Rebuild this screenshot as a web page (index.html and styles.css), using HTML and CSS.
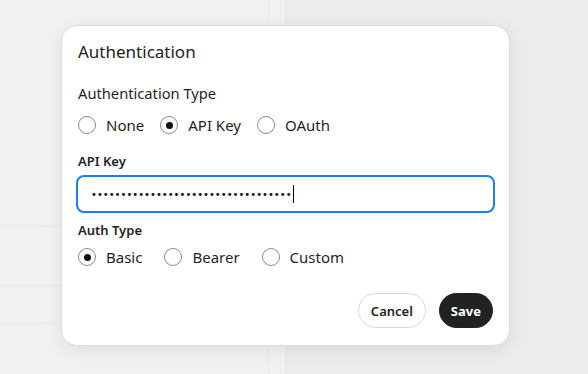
FILE: index.html
```html
<!DOCTYPE html>
<html>
<head>
<meta charset="utf-8">
<link rel="stylesheet" href="styles.css">
</head>
<body>
<div class="backdrop">
  <div class="panel-left">
    <div class="row r1"></div>
    <div class="row r2"></div>
    <div class="row r3"></div>
  </div>
  <div class="panel-right"></div>
</div>
<div class="dialog">
  <h1 class="title">Authentication</h1>
  <div class="section-label">Authentication Type</div>
  <div class="radios radios-top">
    <label class="radio"><span class="circle"></span>None</label>
    <label class="radio"><span class="circle checked"></span>API Key</label>
    <label class="radio"><span class="circle"></span>OAuth</label>
  </div>
  <div class="field-label">API Key</div>
  <div class="input"><span class="dots">••••••••••••••••••••••••••••••••••</span><span class="caret"></span></div>
  <div class="field-label auth">Auth Type</div>
  <div class="radios radios-bottom">
    <label class="radio"><span class="circle checked"></span>Basic</label>
    <label class="radio"><span class="circle"></span>Bearer</label>
    <label class="radio"><span class="circle"></span>Custom</label>
  </div>
  <div class="actions">
    <button class="btn cancel">Cancel</button>
    <button class="btn save">Save</button>
  </div>
</div>
</body>
</html>
```
FILE: styles.css
```css
html, body {
  margin: 0;
  padding: 0;
  width: 588px;
  height: 374px;
  overflow: hidden;
  background: #ececec;
  font-family: "Noto Sans", "Open Sans", sans-serif;
  color: #1f1f1f;
}
.backdrop {
  position: absolute;
  inset: 0;
  display: flex;
}
.panel-left {
  width: 285px;
  background: #f1f1f1;
  border-right: 1px solid #e6e6e6;
  position: relative;
}
.panel-left::after {
  content: "";
  position: absolute;
  top: 0;
  bottom: 0;
  left: 268px;
  border-left: 1px solid #e9e9e9;
}
.row { height: 1px; background: #e6e6e6; width: 268px; }
.r1 { margin-top: 225px; }
.r2 { margin-top: 59px; }
.r3 { margin-top: 37px; }
.panel-right { flex: 1; }

.dialog {
  position: absolute;
  left: 61px;
  top: 25px;
  width: 417px;
  height: 288px;
  padding: 15px 15px 16px 15px;
  background: #fff;
  border: 1px solid #dcdcdc;
  border-radius: 16px;
  box-shadow: 0 4px 18px rgba(0,0,0,0.08);
  display: flex;
  flex-direction: column;
}
.title {
  margin: 0;
  font-size: 17px;
  font-weight: 400;
  line-height: 22px;
  color: #222;
  padding-left: 1px;
}
.section-label {
  margin-top: 20px;
  font-size: 14.7px;
  line-height: 20px;
  padding-left: 1px;
}
.radios {
  display: flex;
  margin-top: 12px;
  font-size: 15px;
  line-height: 20px;
  padding-left: 1px;
}
.radio {
  display: flex;
  align-items: center;
  gap: 10px;
}
.radios-top .radio { margin-right: 16px; }
.radios-bottom .radio { margin-right: 22px; }
.circle {
  width: 18px;
  height: 18px;
  box-sizing: border-box;
  border: 1px solid #8a8a8a;
  border-radius: 50%;
  position: relative;
}
.circle.checked::after {
  content: "";
  position: absolute;
  left: 4.5px;
  top: 4.5px;
  width: 7px;
  height: 7px;
  border-radius: 50%;
  background: #111;
}
.field-label {
  margin-top: 17px;
  font-size: 13px;
  font-weight: 600;
  line-height: 18px;
  padding-left: 1px;
}
.input {
  margin: 5px -1px 0 -1px;
  height: 38px;
  box-sizing: border-box;
  border: 2px solid #1a7ff0;
  border-radius: 8px;
  display: flex;
  align-items: center;
  padding-left: 13px;
}
.dots {
  font-family: "DejaVu Sans", sans-serif;
  font-size: 10px;
  letter-spacing: 0;
  color: #111;
}
.caret {
  width: 1px;
  height: 18px;
  background: #000;
  margin-left: 1px;
}
.field-label.auth { margin-top: 8px; }
.radios-bottom { margin-top: 8px; }
.actions {
  margin-top: auto;
  display: flex;
  justify-content: flex-end;
  gap: 13px;
  padding-right: 1px;
  padding-bottom: 1px;
}
.btn {
  height: 35px;
  border-radius: 18px;
  font-family: inherit;
  font-size: 13px;
  font-weight: 600;
  cursor: pointer;
}
.cancel {
  padding: 0 12px;
  background: #fff;
  border: 1px solid #d8d8d8;
  color: #1f1f1f;
}
.save {
  padding: 0 11px;
  background: #222;
  border: 1px solid #222;
  color: #fff;
  font-weight: 700;
}
```
